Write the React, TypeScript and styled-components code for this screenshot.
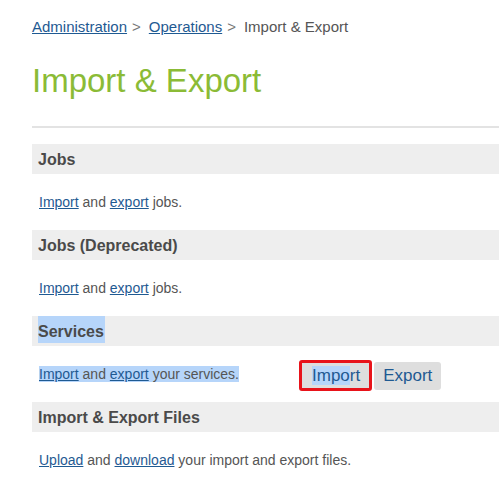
import React from "react";
import styled, { createGlobalStyle } from "styled-components";

const Global = createGlobalStyle`
  html, body { margin: 0; padding: 0; background: #fff; }
  body { font-family: "Liberation Sans", Arial, Helvetica, sans-serif; color: #555; }
`;

const Page = styled.div`
  padding: 17px 0 0 32px;
`;

const Breadcrumb = styled.nav`
  font-size: 15px;
  line-height: 20px;
  color: #555;
  display: flex;
  align-items: center;
`;

const Crumb = styled.a`
  color: #1f5a92;
  text-decoration: underline;
`;

const Sep = styled.span`
  color: #777;
  margin: 0 8px 0 5px;
`;

const Title = styled.h1`
  margin: 24px 0 0 0;
  font-size: 33px;
  line-height: 40px;
  font-weight: normal;
  color: #8bbb36;
`;

const Rule = styled.hr`
  margin: 25px 0 16px 0;
  border: none;
  border-top: 2px solid #e3e3e3;
  height: 0;
`;

const Section = styled.section``;

const Header = styled.h2`
  margin: 0;
  height: 30px;
  line-height: 31px;
  background: #eeeeee;
  padding-left: 6px;
  font-size: 16px;
  font-weight: bold;
  color: #4a4a4a;
`;

const Body = styled.div<{ $split?: boolean }>`
  height: 56px;
  display: grid;
  grid-template-columns: ${(p) => (p.$split ? "260px auto" : "1fr")};
  align-items: center;
  justify-items: start;
  padding-left: 7px;
  font-size: 14px;
  color: #555;
`;

const Text = styled.span``;

const Link = styled.a`
  color: #1f5a92;
  text-decoration: underline;
`;

const Sel = styled.span<{ $on?: boolean }>`
  background: ${(p) => (p.$on ? "#b6d5fa" : "transparent")};
`;

const HeadText = styled.span<{ $on?: boolean }>`
  background: ${(p) => (p.$on ? "#b6d5fa" : "transparent")};
  padding: 0 1px 0 0;
  display: inline-block;
  height: 27px;
  line-height: 31px;
  vertical-align: top;
`;

const Buttons = styled.div`
  display: flex;
  align-items: center;
  gap: 2px;
  margin-top: 3px;
`;

const Btn = styled.button<{ $focus?: boolean }>`
  font-family: "Liberation Sans", Arial, sans-serif;
  font-size: 17px;
  color: #1f5a92;
  background: #dedede;
  border: ${(p) => (p.$focus ? "3px solid #e8131a" : "none")};
  border-radius: 3px;
  height: ${(p) => (p.$focus ? "31px" : "28px")};
  padding: ${(p) => (p.$focus ? "0 9px 0 10px" : "0 9px")};
  cursor: pointer;
`;

export default function App() {
  return (
    <>
      <Global />
      <Page>
        <Breadcrumb>
          <Crumb href="#">Administration</Crumb>
          <Sep>&gt;</Sep>
          <Crumb href="#">Operations</Crumb>
          <Sep>&gt;</Sep>
          <span>Import &amp; Export</span>
        </Breadcrumb>
        <Title>Import &amp; Export</Title>
        <Rule />
        <Section>
          <Header>Jobs</Header>
          <Body>
            <Text>
              <Link href="#">Import</Link> and <Link href="#">export</Link> jobs.
            </Text>
          </Body>
        </Section>
        <Section>
          <Header>Jobs (Deprecated)</Header>
          <Body>
            <Text>
              <Link href="#">Import</Link> and <Link href="#">export</Link> jobs.
            </Text>
          </Body>
        </Section>
        <Section>
          <Header>
            <HeadText $on>Services</HeadText>
          </Header>
          <Body $split>
            <Text>
              <Sel $on>
                <Link href="#">Import</Link> and <Link href="#">export</Link> your services.
              </Sel>
            </Text>
            <Buttons>
              <Btn $focus>
                <Sel $on>Impo</Sel>rt
              </Btn>
              <Btn>Export</Btn>
            </Buttons>
          </Body>
        </Section>
        <Section>
          <Header>Import &amp; Export Files</Header>
          <Body>
            <Text>
              <Link href="#">Upload</Link> and <Link href="#">download</Link> your import and export files.
            </Text>
          </Body>
        </Section>
      </Page>
    </>
  );
}
